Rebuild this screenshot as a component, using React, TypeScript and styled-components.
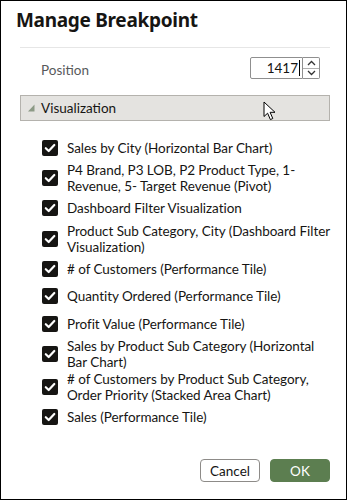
import React from 'react'
import styled, { createGlobalStyle } from 'styled-components'

const GlobalStyle = createGlobalStyle`
    html, body {
        margin: 0;
        padding: 0;
        background: #ffffff;
    }
    * {
        box-sizing: border-box;
    }
`

// line breaks follow the dialog's own wrapping
const items = [
    'Sales by City (Horizontal Bar Chart)',
    'P4 Brand, P3 LOB, P2 Product Type, 1-\nRevenue, 5- Target Revenue (Pivot)',
    'Dashboard Filter Visualization',
    'Product Sub Category, City (Dashboard Filter\nVisualization)',
    '# of Customers (Performance Tile)',
    'Quantity Ordered (Performance Tile)',
    'Profit Value (Performance Tile)',
    'Sales by Product Sub Category (Horizontal\nBar Chart)',
    '# of Customers by Product Sub Category,\nOrder Priority (Stacked Area Chart)',
    'Sales (Performance Tile)',
]

const CheckIcon = () => (
    <svg width="12" height="12" viewBox="0 0 12 12">
        <path d="M1.8 6.2 L4.7 9 L10.3 3" fill="none" stroke="#ffffff" strokeWidth="2.2" strokeLinecap="round" strokeLinejoin="round" />
    </svg>
)

const App = () => {
    return (
        <>
            <GlobalStyle />
            <Dialog>
                <Title>Manage Breakpoint</Title>
                <Body>
                    <PositionRow>
                        <Label>Position</Label>
                        <Spinner>
                            <NumberBox>
                                1417<Caret />
                            </NumberBox>
                            <Arrows>
                                <ArrowBtn>
                                    <svg width="9" height="6" viewBox="0 0 9 6">
                                        <path d="M1 5 L4.5 1.5 L8 5" fill="none" stroke="#333" strokeWidth="1.3" />
                                    </svg>
                                </ArrowBtn>
                                <ArrowBtn>
                                    <svg width="9" height="6" viewBox="0 0 9 6">
                                        <path d="M1 1 L4.5 4.5 L8 1" fill="none" stroke="#333" strokeWidth="1.3" />
                                    </svg>
                                </ArrowBtn>
                            </Arrows>
                        </Spinner>
                    </PositionRow>
                    <SectionHeader>
                        <svg width="7" height="8" viewBox="0 0 7 8">
                            <path d="M6.5 0.5 L6.5 7.5 L0 7.5 Z" fill="#8c9a86" />
                        </svg>
                        <SectionTitle>Visualization</SectionTitle>
                        <Pointer>
                            <svg width="14" height="20" viewBox="0 0 14 20">
                                <path d="M1 1 L1 15.5 L4.6 12.2 L7.4 18.6 L9.8 17.5 L7.1 11.3 L12 11.3 Z" fill="#ffffff" stroke="#000000" strokeWidth="1" strokeLinejoin="round" />
                            </svg>
                        </Pointer>
                    </SectionHeader>
                    <List>
                        {items.map((label) => (
                            <Item key={label}>
                                <Box><CheckIcon /></Box>
                                <ItemText>{label}</ItemText>
                            </Item>
                        ))}
                    </List>
                </Body>
                <Footer>
                    <Button>Cancel</Button>
                    <Button primary>OK</Button>
                </Footer>
            </Dialog>
        </>
    )
}

const Dialog = styled.div`
    width: 347px;
    height: 500px;
    border: 1px solid #000000;
    background: #ffffff;
    display: flex;
    flex-direction: column;
    font-family: Lato, "Noto Sans", sans-serif;
    color: #161513;
`
const Title = styled.div`
    font-family: "Noto Sans", "Liberation Sans", sans-serif;
    font-size: 19px;
    font-weight: 700;
    line-height: 24px;
    padding: 7px 0 0 15px;
    height: 46px;
    letter-spacing: -0.3px;
`
const Body = styled.div`
    margin: 0 16px 0 19px;
    border-top: 1px solid #e6e6e6;
    flex: 1;
`
const PositionRow = styled.div`
    display: flex;
    align-items: flex-start;
    justify-content: space-between;
    padding: 9px 10px 0 21px;
    height: 47px;
`
const Label = styled.span`
    font-size: 13.5px;
    line-height: 16px;
    margin-top: 5px;
    color: #58595b;
`
const Spinner = styled.div`
    display: flex;
    align-items: stretch;
    height: 22px;
`
const NumberBox = styled.div`
    width: 53px;
    border: 1px solid #8f8f8f;
    border-radius: 2px 0 0 2px;
    font-size: 13.5px;
    display: flex;
    align-items: center;
    justify-content: flex-end;
    padding-right: 2px;
    color: #161513;
`
const Caret = styled.span`
    display: inline-block;
    width: 1px;
    height: 16px;
    background: #000000;
    margin-left: 1px;
`
const Arrows = styled.div`
    width: 17px;
    border: 1px solid #8f8f8f;
    border-left: none;
    border-radius: 0 2px 2px 0;
    display: flex;
    flex-direction: column;
`
const ArrowBtn = styled.div`
    flex: 1;
    display: flex;
    align-items: center;
    justify-content: center;
    & + & {
        border-top: 1px solid #b0b0b0;
    }
`
const SectionHeader = styled.div`
    position: relative;
    height: 26px;
    background: #e4e3e0;
    border: 1px solid #b4b2ad;
    display: flex;
    align-items: center;
    padding-left: 7px;
    gap: 6px;
`
const SectionTitle = styled.span`
    font-size: 13.5px;
    color: #161513;
`
const Pointer = styled.div`
    position: absolute;
    left: 242px;
    top: 5px;
    line-height: 0;
`
const List = styled.div`
    padding: 13px 0 0 22px;
    display: flex;
    flex-direction: column;
`
const Item = styled.div`
    display: flex;
    align-items: center;
    gap: 9px;
    min-height: 27.5px;
    padding: 0.5px 0;
`
const Box = styled.div`
    flex: 0 0 16px;
    width: 16px;
    height: 16px;
    border-radius: 2px;
    background: #161513;
    display: flex;
    align-items: center;
    justify-content: center;
`
const ItemText = styled.span`
    font-size: 13.5px;
    line-height: 16px;
    white-space: pre;
    letter-spacing: -0.05px;
`
const Footer = styled.div`
    display: flex;
    justify-content: flex-end;
    gap: 10px;
    padding: 0 16px 17px 0;
`
const Button = styled.button<{ primary?: boolean }>`
    width: 60px;
    height: 23px;
    border-radius: 4px;
    font-family: Lato, "Noto Sans", sans-serif;
    font-size: 13.5px;
    padding: 0;
    cursor: pointer;
    border: 1px solid ${({ primary }) => (primary ? '#5c7e50' : '#8d8b88')};
    background: ${({ primary }) => (primary ? '#5c7e50' : '#ffffff')};
    color: ${({ primary }) => (primary ? '#ffffff' : '#161513')};
`

export default App
